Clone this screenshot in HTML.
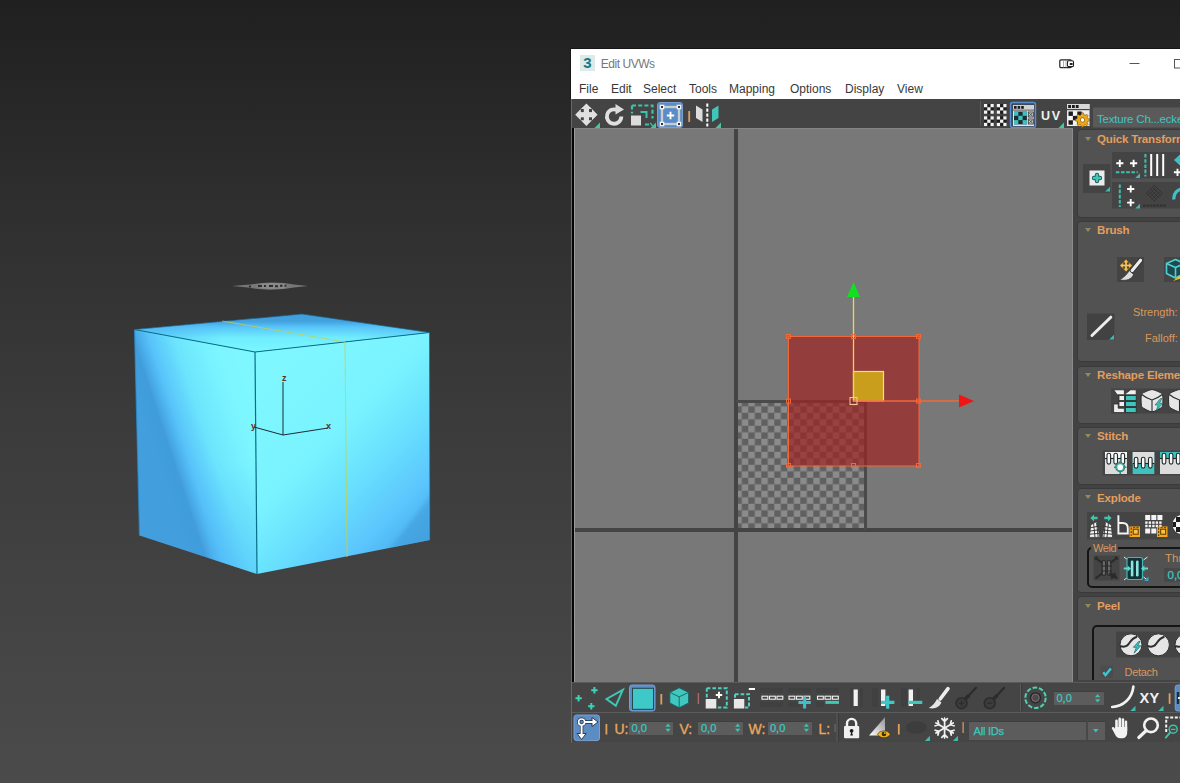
<!DOCTYPE html>
<html lang="en">
<head>
<meta charset="utf-8">
<title>Edit UVWs</title>
<style>
*{box-sizing:border-box;margin:0;padding:0}
html,body{width:1180px;height:783px;overflow:hidden;background:#333}
body{font-family:"Liberation Sans","DejaVu Sans",sans-serif;}
#root{position:absolute;left:0;top:0;width:1180px;height:783px;overflow:hidden;
 background:linear-gradient(180deg,#202020 0px,#242424 60px,#2f2f2f 210px,#3a3a3a 400px,#434343 600px,#4b4b4b 783px);}
.abs{position:absolute}
svg{position:absolute;overflow:visible}
#scene{left:0;top:0;width:580px;height:783px}
.r{position:absolute}
.t{position:absolute;white-space:nowrap;line-height:1}
.menu{font-size:12px;color:#383838;top:83px}
.hd{font-size:11.5px;font-weight:bold;color:#e39e5e;letter-spacing:-0.15px}
.lb{font-size:11px;color:#d9985e}
.teal{color:#3ec8c0;-webkit-text-stroke:0.25px #3ec8c0}
.grp{position:absolute;border:1px solid #3a3a3a;border-radius:4px;background:#525252}
.tri{position:absolute;width:0;height:0;border-left:3px solid transparent;border-right:3px solid transparent;border-top:4px solid #8c8c62}
.spin{position:absolute;background:#5c5c5c;height:15px}
</style>
</head>
<body>
<div id="root">
<svg id="scene" class="abs" width="580" height="783" viewBox="0 0 580 783">
<defs>
<linearGradient id="gTop" x1="0" y1="314" x2="0" y2="352" gradientUnits="userSpaceOnUse">
<stop offset="0" stop-color="#409edb"/><stop offset="0.2" stop-color="#43a3df"/><stop offset="0.34" stop-color="#58c4f8"/><stop offset="0.62" stop-color="#70ecfd"/><stop offset="1" stop-color="#7af8fd"/>
</linearGradient>
<linearGradient id="gTopH" x1="134" y1="0" x2="430" y2="0" gradientUnits="userSpaceOnUse">
<stop offset="0" stop-color="#4cb4f4" stop-opacity="0.75"/><stop offset="0.3" stop-color="#4cb4f4" stop-opacity="0"/><stop offset="0.75" stop-color="#4cb4f4" stop-opacity="0"/><stop offset="1" stop-color="#4cb4f4" stop-opacity="0.35"/>
</linearGradient>
<linearGradient id="gLeft" x1="150" y1="436" x2="253" y2="402" gradientUnits="userSpaceOnUse">
<stop offset="0" stop-color="#429edc"/><stop offset="0.13" stop-color="#419cda"/><stop offset="0.2" stop-color="#4cb0ec"/><stop offset="0.28" stop-color="#58c4fa"/><stop offset="0.5" stop-color="#6ce5fd"/><stop offset="0.8" stop-color="#7af5ff"/><stop offset="1" stop-color="#7ef7ff"/>
</linearGradient>
<linearGradient id="gLeftV" x1="0" y1="352" x2="0" y2="574" gradientUnits="userSpaceOnUse">
<stop offset="0" stop-color="#4cb4f6" stop-opacity="0"/><stop offset="0.5" stop-color="#4cb4f6" stop-opacity="0"/><stop offset="1" stop-color="#4cb4f6" stop-opacity="0.4"/>
</linearGradient>
<linearGradient id="gRight" x1="257" y1="352" x2="437" y2="532" gradientUnits="userSpaceOnUse">
<stop offset="0" stop-color="#80f8ff"/><stop offset="0.44" stop-color="#79f3ff"/><stop offset="0.64" stop-color="#68e0fe"/><stop offset="0.83" stop-color="#5bc5fd"/><stop offset="0.93" stop-color="#4db4f0"/><stop offset="1" stop-color="#46a8e4"/>
</linearGradient>
<filter id="blur1"><feGaussianBlur stdDeviation="0.6"/></filter>
<filter id="blur2" x="-30%" y="-30%" width="160%" height="160%"><feGaussianBlur stdDeviation="2.2"/></filter>
<clipPath id="clipR"><polygon points="255,352 429.5,332.5 430,540 257,574"/></clipPath>
</defs>
<!-- small light marker above cube -->
<polygon points="232,286 250,284.6 262,283 272,282.4 284,283 294,284.4 308,286 294,287.6 284,289 270,289.8 258,289 248,287.6" fill="#777"/>
<polygon points="256,286 262,283.6 272,283 284,283.6 288,286 284,288.4 272,289 262,288.4" fill="#8a8a8a"/>
<path d="M249 286.5h2m7 -0.5h4m2 0h2m3 0h4m2 0.2h3m2 -0.5h2.5m2 0h2" stroke="#2e2e2e" stroke-width="2" fill="none"/>
<!-- cube -->
<g filter="url(#blur1)">
<polygon points="134.5,329.5 302,314 429.5,332.5 255,352" fill="url(#gTop)"/>
<polygon points="134.5,329.5 302,314 429.5,332.5 255,352" fill="url(#gTopH)"/>
<polygon points="134.5,329.5 255,352 257,574 139.5,535.5" fill="url(#gLeft)"/>
<polygon points="170,336 255,352 257,574 215,560" fill="url(#gLeftV)"/>
<polygon points="255,352 429.5,332.5 430,540 257,574" fill="url(#gRight)"/>
</g>
<g clip-path="url(#clipR)"><polygon points="432,494 432,544 390,549" fill="#3f9cd8" fill-opacity="0.6" filter="url(#blur2)"/></g>
<g fill="none" stroke="#08708c" stroke-width="1.2">
<polyline points="134.5,329.5 255,352 429.5,332.5"/>
<polyline points="255,352 257,574"/>
<polyline points="134.5,329.5 139.5,535.5" stroke="#2a8fd0" stroke-opacity="0.7"/>
<polyline points="134.5,329.5 302,314 429.5,332.5 430,540" stroke="#1a5f88" stroke-opacity="0.65" stroke-width="1"/>
</g>
<g fill="none" stroke="#c9cf4a" stroke-width="1" stroke-opacity="0.75">
<polyline points="222,321 345,342 347,557"/>
</g>
<!-- axis tripod -->
<g fill="none" stroke="#1d2b33" stroke-width="1">
<polyline points="283,382 283,435 328,428"/>
<polyline points="283,435 254,427"/>
</g>
<g font-family="Liberation Sans, sans-serif" font-size="9" font-weight="bold" fill="#5a302c">
<text x="282" y="381">z</text><text x="326" y="429">x</text><text x="251" y="429">y</text>
</g>
</svg>

<!-- window frame -->
<div class="r" style="left:571px;top:48px;width:609px;height:696px;background:#444"></div>
<div class="r" style="left:570px;top:48px;width:610px;height:1px;background:#161616"></div>
<div class="r" style="left:570px;top:48px;width:1px;height:51px;background:#161616"></div>
<div class="r" style="left:571px;top:49px;width:609px;height:50px;background:#fff"></div>
<div class="r" style="left:571px;top:99px;width:1px;height:644px;background:#686868"></div>
<!-- title -->
<div class="r" style="left:580px;top:55px;width:15px;height:15.5px;background:#dcebe8"></div>
<div class="t" style="left:583.3px;top:54.5px;font-size:15px;font-weight:bold;color:#177585">3</div>
<div class="t" style="left:600.7px;top:58px;font-size:12px;color:#777;letter-spacing:-0.45px">Edit UVWs</div>
<svg width="130" height="30" viewBox="1050 48 130 30" style="left:1050px;top:48px">
<rect x="1059.8" y="59.8" width="11.5" height="7.8" rx="1" fill="#fff" stroke="#222" stroke-width="1.2"/>
<path d="M1063.5 60v7.5M1066 60v7.5" stroke="#999" stroke-width="0.8"/>
<rect x="1067.5" y="60.8" width="6" height="5.8" rx="1.2" fill="#fff" stroke="#222" stroke-width="1.1"/>
<rect x="1069.8" y="63" width="2.8" height="2" fill="#222"/>
<path d="M1129.5 63.5h10" stroke="#555" stroke-width="1"/>
<rect x="1174.5" y="59.5" width="9" height="8.5" fill="none" stroke="#555" stroke-width="1"/>
</svg>

<!-- menu -->
<div class="t menu" style="left:579px">File</div>
<div class="t menu" style="left:611px">Edit</div>
<div class="t menu" style="left:643px">Select</div>
<div class="t menu" style="left:689px">Tools</div>
<div class="t menu" style="left:729px">Mapping</div>
<div class="t menu" style="left:790px">Options</div>
<div class="t menu" style="left:845px">Display</div>
<div class="t menu" style="left:897px">View</div>
<!-- top toolbar -->
<div class="r" style="left:572px;top:99px;width:608px;height:29px;background:#444"></div>
<svg width="608" height="29" viewBox="572 99 608 29" style="left:572px;top:99px">
<!-- move -->
<g fill="#e0e0e0" transform="translate(586.4,114.7)">
<polygon points="0,-11.2 -5.6,-5.6 5.6,-5.6"/><polygon points="0,11.2 -5.6,5.6 5.6,5.6"/>
<polygon points="-11.2,0 -5.6,-5.6 -5.6,5.6"/><polygon points="11.2,0 5.6,-5.6 5.6,5.6"/>
<rect x="-2.6" y="-7" width="5.2" height="14"/><rect x="-7" y="-2.6" width="14" height="5.2"/>
</g>
<polygon points="600,122.5 600,128 594.5,128" fill="#48c4a0"/>
<!-- rotate -->
<path d="M617.5 110.2 A7.2 7.2 0 1 0 621.3 116.5" fill="none" stroke="#e0e0e0" stroke-width="3.8"/>
<polygon points="615.5,104 624,109.5 615.5,114.5" fill="#dcdcdc"/>
<!-- scale -->
<g fill="none" stroke="#3fc0ae" stroke-width="2.2">
<path d="M632 105.5h20.5v13" stroke-dasharray="4 2.2"/>
<path d="M632 105.5v8" stroke-dasharray="4 2.2"/>
<path d="M645 124.5h7" stroke-dasharray="4 2.2"/>
<path d="M640.5 112h6v6" stroke-width="2"/>
</g>
<rect x="631" y="115.5" width="10" height="10" fill="#dcdcdc"/>
<polygon points="656,122.5 656,128 650.5,128" fill="#48c4a0"/>
<path d="M650 123l3 3" stroke="#35b5a8" stroke-width="1.2"/>
<!-- freeform selected -->
<rect x="657.5" y="102.5" width="25" height="25" rx="2.5" fill="#5c8cc4" stroke="#7a9fd0" stroke-width="1"/>
<rect x="662" y="107" width="17" height="17" fill="none" stroke="#f4f4f4" stroke-width="2.2"/>
<rect x="662" y="107" width="17" height="17" fill="none" stroke="#4a5a70" stroke-width="0.5"/>
<g fill="#f4f4f4"><rect x="659.7" y="104.7" width="4.6" height="4.6"/><rect x="659.7" y="121.7" width="4.6" height="4.6"/><rect x="676.7" y="104.7" width="4.6" height="4.6"/><rect x="676.7" y="121.7" width="4.6" height="4.6"/></g><g fill="#333"><rect x="661.0" y="106.0" width="2" height="2"/><rect x="661.0" y="123.0" width="2" height="2"/><rect x="678.0" y="106.0" width="2" height="2"/><rect x="678.0" y="123.0" width="2" height="2"/></g>
<path d="M666.8 115.5h7.4M670.5 111.8v7.4" stroke="#fff" stroke-width="1.9"/>
<!-- separator -->
<rect x="688.3" y="111" width="1.8" height="11" fill="#d9a066"/>
<!-- mirror -->
<polygon points="696,105.5 702.5,109.5 702.5,122 696,118" fill="#dcdcdc"/>
<path d="M707.3 103.5v23" stroke="#fff" stroke-width="2" stroke-dasharray="3.2 1.8"/>
<polygon points="718.5,105.5 712,109.5 712,122 718.5,118" fill="#3fc6b6"/>
<polygon points="721,122.5 721,128 715.5,128" fill="#48c4a0"/>
<!-- right part -->
<rect x="980" y="101" width="1" height="25" fill="#5a5a5a"/>
<rect x="984" y="104" width="9.75" height="9.75" fill="#1c1c1c"/><rect x="984.00" y="104.00" width="3.25" height="3.25" fill="#f4f4f4"/><rect x="984.00" y="110.50" width="3.25" height="3.25" fill="#f4f4f4"/><rect x="987.25" y="107.25" width="3.25" height="3.25" fill="#f4f4f4"/><rect x="990.50" y="104.00" width="3.25" height="3.25" fill="#f4f4f4"/><rect x="990.50" y="110.50" width="3.25" height="3.25" fill="#f4f4f4"/>
<rect x="996.8" y="104" width="9.75" height="9.75" fill="#1c1c1c"/><rect x="996.80" y="104.00" width="3.25" height="3.25" fill="#f4f4f4"/><rect x="996.80" y="110.50" width="3.25" height="3.25" fill="#f4f4f4"/><rect x="1000.05" y="107.25" width="3.25" height="3.25" fill="#f4f4f4"/><rect x="1003.30" y="104.00" width="3.25" height="3.25" fill="#f4f4f4"/><rect x="1003.30" y="110.50" width="3.25" height="3.25" fill="#f4f4f4"/>
<rect x="984" y="116.3" width="9.75" height="9.75" fill="#1c1c1c"/><rect x="984.00" y="116.30" width="3.25" height="3.25" fill="#f4f4f4"/><rect x="984.00" y="122.80" width="3.25" height="3.25" fill="#f4f4f4"/><rect x="987.25" y="119.55" width="3.25" height="3.25" fill="#f4f4f4"/><rect x="990.50" y="116.30" width="3.25" height="3.25" fill="#f4f4f4"/><rect x="990.50" y="122.80" width="3.25" height="3.25" fill="#f4f4f4"/>
<rect x="996.8" y="116.3" width="9.75" height="9.75" fill="#1c1c1c"/><rect x="996.80" y="116.30" width="3.25" height="3.25" fill="#f4f4f4"/><rect x="996.80" y="122.80" width="3.25" height="3.25" fill="#f4f4f4"/><rect x="1000.05" y="119.55" width="3.25" height="3.25" fill="#f4f4f4"/><rect x="1003.30" y="116.30" width="3.25" height="3.25" fill="#f4f4f4"/><rect x="1003.30" y="122.80" width="3.25" height="3.25" fill="#f4f4f4"/>
<rect x="1010.5" y="102.5" width="25" height="25" rx="2" fill="#3c4a5c" stroke="#5a8fcf" stroke-width="1.4"/>
<rect x="1013" y="105" width="21" height="21" fill="#e6e6e6"/>
<rect x="1013" y="105" width="21" height="4.6" fill="#d0d0d0"/>
<rect x="1014.0" y="106" width="2.6" height="2.8" fill="#1c1c1c"/>
<rect x="1017.6" y="106" width="2.6" height="2.8" fill="#1c1c1c"/>
<rect x="1021.2" y="106" width="2.6" height="2.8" fill="#1c1c1c"/>
<rect x="1013" y="109.6" width="21" height="1" fill="#555"/>
<rect x="1014" y="111.5" width="12.90" height="12.90" fill="#1c2c30"/><rect x="1014.00" y="111.50" width="4.30" height="4.30" fill="#3fc0c0"/><rect x="1014.00" y="120.10" width="4.30" height="4.30" fill="#3fc0c0"/><rect x="1018.30" y="115.80" width="4.30" height="4.30" fill="#3fc0c0"/><rect x="1022.60" y="111.50" width="4.30" height="4.30" fill="#3fc0c0"/><rect x="1022.60" y="120.10" width="4.30" height="4.30" fill="#3fc0c0"/>
<rect x="1028.3" y="112" width="5" height="5" fill="#ddd" stroke="#333" stroke-width="0.9"/>
<path d="M1029.3 113l3 3m0 -3l-3 3" stroke="#333" stroke-width="0.9"/>
<rect x="1028.3" y="119" width="5" height="5" fill="#ddd" stroke="#333" stroke-width="0.9"/>
<path d="M1029.3 120l3 3m0 -3l-3 3" stroke="#333" stroke-width="0.9"/>
<rect x="1067" y="104" width="22.5" height="22" fill="#ececec"/>
<rect x="1067" y="104" width="22.5" height="5" fill="#dadada"/>
<rect x="1068.2" y="105" width="2.8" height="3" fill="#1c1c1c"/>
<rect x="1072.0" y="105" width="2.8" height="3" fill="#1c1c1c"/>
<rect x="1075.8" y="105" width="2.8" height="3" fill="#1c1c1c"/>
<rect x="1067" y="109" width="22.5" height="1.2" fill="#444"/>
<rect x="1068.5" y="111.5" width="13.20" height="13.20" fill="#f4f4f4"/><rect x="1068.50" y="111.50" width="4.40" height="4.40" fill="#1c1c1c"/><rect x="1068.50" y="120.30" width="4.40" height="4.40" fill="#1c1c1c"/><rect x="1072.90" y="115.90" width="4.40" height="4.40" fill="#1c1c1c"/><rect x="1077.30" y="111.50" width="4.40" height="4.40" fill="#1c1c1c"/><rect x="1077.30" y="120.30" width="4.40" height="4.40" fill="#1c1c1c"/>
<polygon points="1089.66,119.21 1089.66,120.79 1087.69,121.51 1087.23,122.60 1088.12,124.50 1087.00,125.62 1085.10,124.73 1084.01,125.19 1083.29,127.16 1081.71,127.16 1080.99,125.19 1079.90,124.73 1078.00,125.62 1076.88,124.50 1077.77,122.60 1077.31,121.51 1075.34,120.79 1075.34,119.21 1077.31,118.49 1077.77,117.40 1076.88,115.50 1078.00,114.38 1079.90,115.27 1080.99,114.81 1081.71,112.84 1083.29,112.84 1084.01,114.81 1085.10,115.27 1087.00,114.38 1088.12,115.50 1087.23,117.40 1087.69,118.49" fill="#f0a818" stroke="#5a3c00" stroke-width="0.5"/>
<circle cx="1082.5" cy="120" r="2.2" fill="#fff" stroke="#5a3c00" stroke-width="0.6"/>
<!-- UV -->
<text x="1041" y="119.6" font-family="Liberation Sans, sans-serif" font-weight="bold" font-size="12.5" fill="#f0f0f0" letter-spacing="1.6">UV</text>
<polygon points="1064,122.5 1064,128 1058.5,128" fill="#48c4a0"/>
<!-- dropdown -->
<rect x="1093" y="107.5" width="90" height="20" fill="#5a5a5a"/>
<text x="1097" y="122.5" font-family="Liberation Sans, sans-serif" font-size="11.5" fill="#3ec6c4" letter-spacing="-0.2">Texture Ch...ecke</text>
</svg>

<!-- viewport -->
<div class="r" style="left:572px;top:128px;width:2px;height:554px;background:#050505"></div>
<div class="r" id="vp" style="left:574px;top:128px;width:499px;height:554px;background:#787878;overflow:hidden;border-left:1px solid #9a9a9a;border-right:1px solid #8c8c8c;border-top:1px solid #858585">
<svg width="500" height="554" viewBox="574 128 500 554" style="left:-1px;top:-1px">
<defs>
<pattern id="chk" x="735.3" y="399.8" width="13" height="13" patternUnits="userSpaceOnUse">
<rect width="13" height="13" fill="#606060"/>
<rect width="6.5" height="6.5" fill="#8b8b8b"/><rect x="6.5" y="6.5" width="6.5" height="6.5" fill="#8b8b8b"/>
</pattern>
</defs>
<!-- checker tile -->
<rect x="738" y="402" width="127" height="126" fill="url(#chk)"/>
<!-- grid lines -->
<rect x="574" y="528" width="500" height="4" fill="#444"/>
<rect x="734" y="128" width="4" height="554" fill="#444"/>
<rect x="736" y="400" width="131" height="3" fill="#4a4a4a"/>
<rect x="864" y="400" width="3" height="130" fill="#4a4a4a"/>
<!-- selected red region -->
<rect x="788.5" y="336.5" width="130.5" height="129.5" fill="#a02323" fill-opacity="0.7" stroke="#f0683a" stroke-width="1"/>
<rect x="853.5" y="371.5" width="30" height="29.5" fill="#c99e1c" stroke="#f3e27a" stroke-width="1.2"/>
<!-- gizmo -->
<line x1="853.5" y1="401" x2="853.5" y2="296" stroke="#ecd84a" stroke-width="1.3"/>
<polygon points="853.5,282 847,297 860,297" fill="#12e020"/>
<line x1="853.5" y1="401" x2="960" y2="401" stroke="#f0683a" stroke-width="1.3"/>
<polygon points="974,401 959,394.5 959,407.5" fill="#f01414"/>
<g fill="none" stroke="#f0683a" stroke-width="1">
<rect x="786.5" y="334.5" width="4" height="4"/><rect x="851.5" y="334.5" width="4" height="4"/><rect x="916.5" y="334.5" width="4" height="4"/>
<rect x="786.5" y="399" width="4" height="4"/><rect x="916.5" y="399" width="4" height="4"/>
<rect x="786.5" y="463.5" width="4" height="4"/><rect x="851.5" y="463.5" width="4" height="4"/><rect x="916.5" y="463.5" width="4" height="4"/>
<rect x="850" y="397.5" width="7" height="7" stroke="#f6c9a0"/>
</g>
</svg>

</div>
<!-- right panel -->
<div class="r" style="left:1073px;top:128px;width:107px;height:554px;background:#424242"></div>
<!-- panel groups -->
<div class="grp" style="left:1077px;top:129px;width:110px;height:89px"></div>
<div class="grp" style="left:1077px;top:221px;width:110px;height:141px"></div>
<div class="grp" style="left:1077px;top:366px;width:110px;height:58px"></div>
<div class="grp" style="left:1077px;top:427px;width:110px;height:58px"></div>
<div class="grp" style="left:1077px;top:488px;width:110px;height:105px"></div>
<div class="grp" style="left:1077px;top:596px;width:110px;height:95px"></div>
<div class="tri" style="left:1084.5px;top:136.5px"></div>
<div class="tri" style="left:1084.5px;top:227.5px"></div>
<div class="tri" style="left:1084.5px;top:372.5px"></div>
<div class="tri" style="left:1084.5px;top:433.5px"></div>
<div class="tri" style="left:1084.5px;top:494.5px"></div>
<div class="tri" style="left:1084.5px;top:603.5px"></div>
<div class="t hd" style="left:1097px;top:134px">Quick Transform</div>
<div class="t hd" style="left:1097px;top:225px">Brush</div>
<div class="t hd" style="left:1097px;top:370px">Reshape Elements</div>
<div class="t hd" style="left:1097px;top:431px">Stitch</div>
<div class="t hd" style="left:1097px;top:493px">Explode</div>
<div class="t hd" style="left:1097px;top:601px">Peel</div>
<div class="t lb" style="left:1133px;top:307px">Strength:</div>
<div class="t lb" style="left:1145px;top:333px">Falloff:</div>
<!-- weld box -->
<div class="r" style="left:1087px;top:547px;width:110px;height:41px;border:2px solid #151515;border-radius:5px"></div>
<div class="t lb" style="left:1091px;top:542.5px;background:#525252;padding:0 2px;font-size:11px;letter-spacing:-0.4px">Weld</div>
<div class="t lb" style="left:1165px;top:553px;font-size:11.5px">Thr</div>
<div class="r" style="left:1164px;top:568px;width:30px;height:14px;background:#484848"></div>
<div class="t teal" style="left:1167.5px;top:570px;font-size:11.5px">0,0</div>
<!-- peel box -->
<div class="r" style="left:1092px;top:625px;width:110px;height:70px;border:2px solid #151515;border-radius:5px"></div>
<div class="t lb" style="left:1124.5px;top:666.5px;font-size:11px;letter-spacing:-0.3px">Detach</div>
<svg width="110" height="554" viewBox="1070 128 110 554" style="left:1070px;top:128px">
<defs>
<g id="plusW"><path d="M-3.6 0h7.2M0 -3.6v7.2" stroke="#fff" stroke-width="1.9" fill="none"/></g>
<g id="cornT"><polygon points="0,-4.8 0,0 -4.8,0" fill="#3cbcb4"/></g>
</defs>
<!-- Quick transform -->
<rect x="1083" y="164" width="27.5" height="29" fill="#444"/>
<rect x="1089.5" y="170.5" width="15" height="15" fill="#ebebeb"/>
<path d="M1094 178h6M1097 175v6" stroke="#1d5f5c" stroke-width="4.4" stroke-linecap="round" fill="none"/>
<path d="M1094 178h6M1097 175v6" stroke="#3fc6b6" stroke-width="2.6" stroke-linecap="round" fill="none"/>
<use href="#cornT" x="1110" y="191.5"/>
<rect x="1112" y="152" width="70" height="26.5" fill="#444"/>
<rect x="1112" y="182" width="70" height="26.5" fill="#444"/>
<use href="#plusW" x="1119.8" y="163.3"/><use href="#plusW" x="1133.6" y="163.3"/>
<path d="M1115.8 172.2h22" stroke="#3fc0ae" stroke-width="2" stroke-dasharray="3.6 1.6" fill="none"/>
<use href="#cornT" x="1140" y="178"/>
<path d="M1145.4 154v22.5" stroke="#3fc0ae" stroke-width="2" stroke-dasharray="3.6 1.6" fill="none"/>
<path d="M1151.2 154v22M1157.2 154v22M1163.2 154v22" stroke="#fff" stroke-width="2" fill="none"/>
<polygon points="1180,154.5 1174,160 1180,165.5" fill="#3fc0c8"/>
<use href="#plusW" x="1177.5" y="172.3"/>
<path d="M1119.8 184.4v22.5" stroke="#3fc0ae" stroke-width="2" stroke-dasharray="3.6 1.6" fill="none"/>
<use href="#plusW" x="1130.7" y="189"/><use href="#plusW" x="1130.7" y="202.6"/>
<use href="#cornT" x="1140" y="208.5"/>
<g stroke="#333" stroke-width="1.2" fill="none">
<path d="M1146.3 193.3l8 -8l8 8l-8 8zM1150.3 189.3l8 8M1158.3 189.3l-8 8M1148.3 191.3l8 8M1152.3 187.3l8 8M1160.3 191.3l-8 8M1156.3 187.3l-8 8" stroke-width="1"/>
<path d="M1143 205.7h23" stroke-width="2.2" stroke-dasharray="2.6 0.8"/>
</g>
<path d="M1174 199.5a9 9 0 0 1 9 -10.5" stroke="#3fc0c8" stroke-width="3.2" fill="none"/>
<!-- Brush icons -->
<rect x="1117" y="257" width="27" height="25" fill="#444"/>
<g transform="translate(1126,265.5)" fill="#f2c25e" stroke="#5a3a00" stroke-width="0.5">
<polygon points="0,-6.3 -3.2,-2.8 3.2,-2.8"/><polygon points="0,6.3 -3.2,2.8 3.2,2.8"/>
<polygon points="-6.3,0 -2.8,-3.2 -2.8,3.2"/><polygon points="6.3,0 2.8,-3.2 2.8,3.2"/>
<rect x="-0.9" y="-4" width="1.8" height="8" stroke="none"/><rect x="-4" y="-0.9" width="8" height="1.8" stroke="none"/>
</g>
<path d="M1140.6 260.2L1132.2 270.6" stroke="#2c2c2c" stroke-width="4.6" stroke-linecap="round" fill="none"/>
<path d="M1140.6 260.2L1132.2 270.6" stroke="#ededed" stroke-width="3.2" stroke-linecap="round" fill="none"/>
<path d="M1129.2 270.6L1133.6 274.4C1131.8 279.2 1126 281.4 1119.6 279.8C1123.5 277.8 1127 274.5 1129.2 270.6z" fill="#dedede" stroke="#2c2c2c" stroke-width="0.7"/>
<rect x="1164" y="257" width="20" height="25" fill="#444"/>
<g fill="#1d4a50" stroke="#52d0d0" stroke-width="1.6" stroke-linejoin="round">
<path d="M1166.5 263.5l9 -4l9 4v10l-9 4.5l-9 -4.5z"/>
<path d="M1166.5 263.5l9 4l9 -4M1175.5 267.5v10.5" fill="none"/>
</g>
<path d="M1173 281l7 -5.5l2 2.5z" fill="#f2c21e"/>
<!-- line icon -->
<rect x="1087" y="313.5" width="27.5" height="26.5" fill="#424242"/>
<path d="M1092 335.5L1110.8 317.2" stroke="#ededed" stroke-width="3" stroke-linecap="round" fill="none"/>
<use href="#cornT" x="1114" y="339.5"/>
<!-- Reshape -->
<rect x="1111" y="388.5" width="72" height="25" fill="#444"/>
<g stroke="#2a2a2a" stroke-width="0.8">
<path d="M1113.6 389.8h10.8v5h-7.2z" fill="#f0f0f0"/>
<rect x="1119" y="395.6" width="5.4" height="5" fill="#f0f0f0"/>
<rect x="1119" y="401.6" width="5.4" height="5" fill="#f0f0f0"/>
<path d="M1113.6 404h4.6v4.2h6.2v4.4h-10.8z" fill="#ececec"/>
<path d="M1125.6 394.8v-1.2l5 -3.8h5.6v5z" fill="#f0f0f0"/>
<rect x="1125.6" y="395.6" width="10.6" height="5" fill="#3fc4bc"/>
<rect x="1125.6" y="401.6" width="10.6" height="5" fill="#3fc4bc"/>
<rect x="1125.6" y="407.6" width="10.6" height="5" fill="#3fc4bc"/>
</g>
<g id="rcube">
<path d="M1152 389.6c2 0 9 3 10.2 4.2c1 1 1 11 0 13c-1.2 1.6 -8.2 5 -10.2 5s-9 -3.4 -10.2 -5c-1 -2 -1 -12 0 -13c1.2 -1.2 8.2 -4.2 10.2 -4.2z" fill="#e6e6e6" stroke="#2a2a2a" stroke-width="1"/>
<path d="M1141.8 394.5c3 2.5 7 4.5 10.2 5.5c3.2 -1 7.2 -3 10.2 -5.5M1152 400v11.5" fill="none" stroke="#2a2a2a" stroke-width="1.1"/>
</g>
<path d="M1160.5 398.5l-5.5 6.5h3.2l-2.2 6l6.8 -7.8h-3.3l2.5 -4.7z" fill="#3fc4bc" stroke="#1d5f5c" stroke-width="0.6"/>
<use href="#rcube" x="27.5"/>
<!-- Stitch -->
<rect x="1102.5" y="450.5" width="80" height="25" fill="#444"/>
<rect x="1105" y="452" width="22" height="22" fill="#dcdcdc"/><rect x="1105" y="452" width="22" height="6.5" fill="#f6f6f6"/>
<rect x="1132.7" y="452" width="21.6" height="22" fill="#3fc2be"/><rect x="1132.7" y="452" width="21.6" height="11.5" fill="#dedede"/>
<rect x="1160" y="452" width="22" height="22" fill="#dcdcdc"/><rect x="1160" y="452" width="22" height="6.5" fill="#3fc2be"/>
<g fill="#fafafa" stroke="#1e2a2a" stroke-width="1.1">
<path d="M1105 458.5h22" /><path d="M1132.7 463.5h21.6"/><path d="M1160 458.5h22"/>
<rect x="1107" y="453.3" width="3.6" height="10.8" rx="1.8"/><rect x="1113.9" y="453.3" width="3.6" height="10.8" rx="1.8"/><rect x="1121" y="453.3" width="3.6" height="10.8" rx="1.8"/>
<rect x="1134.3" y="457.3" width="3.6" height="10.8" rx="1.8"/><rect x="1141.4" y="457.3" width="3.6" height="10.8" rx="1.8"/><rect x="1148.5" y="457.3" width="3.6" height="10.8" rx="1.8"/>
<rect x="1162.2" y="453.3" width="3.6" height="10.8" rx="1.8"/><rect x="1169.3" y="453.3" width="3.6" height="10.8" rx="1.8"/><rect x="1176.4" y="453.3" width="3.6" height="10.8" rx="1.8"/>
</g>
<circle cx="1120.2" cy="467.2" r="3.6" fill="#fff" stroke="#1d5f5c" stroke-width="2.6"/>
<circle cx="1120.2" cy="467.2" r="3.6" fill="#fff" stroke="#3fae9e" stroke-width="1.5"/>
<path d="M1120.2 461v2.5M1120.2 471v3M1114 467.2h2.5M1124 467.2h2.6" stroke="#2f8f84" stroke-width="1.6"/>
<!-- Explode -->
<rect x="1087" y="512" width="96" height="27.5" fill="#444"/>
<g fill="#3fc4b0" stroke="none">
<polygon points="1090.3,518 1094,514.6 1094,516.8 1097.6,516.8 1097.6,519.2 1094,519.2 1094,521.4"/>
<polygon points="1111.6,518 1107.9,514.6 1107.9,516.8 1104.3,516.8 1104.3,519.2 1107.9,519.2 1107.9,521.4"/>
</g>
<g fill="#f4f4f4" stroke="#2a2a2a" stroke-width="0.7">
<path d="M1089.4 537.4l1.4 -12.6l6 -3.2l3.2 15.8z"/>
<path d="M1112.6 537.4l-1.4 -12.6l-6 -3.2l-3.2 15.8z"/>
</g>
<g fill="none" stroke="#2a2a2a" stroke-width="0.9">
<path d="M1090.6 527.8l7.6 -1.6M1090.2 531l8.6 -1.2M1089.8 534.2l9.6 -0.8M1093.6 523.4l1.4 14M1096.6 522.6l1.6 14.8"/>
<path d="M1111.4 527.8l-7.6 -1.6M1111.8 531l-8.6 -1.2M1112.2 534.2l-9.6 -0.8M1108.4 523.4l-1.4 14M1105.4 522.6l-1.6 14.8"/>
</g>
<path d="M1118.4 515.2v18.3h9.4v-5.2c0 -3.2 -2 -5.3 -5.2 -5.3h-4.2" fill="none" stroke="#f4f4f4" stroke-width="1.9"/>
<g id="oicon">
<rect x="1129.5" y="526.5" width="10.5" height="10.5" fill="#f4a81c"/>
<rect x="1133.2" y="529.2" width="5" height="5" fill="#f8c04a" stroke="#4a2c00" stroke-width="0.9"/>
<path d="M1131.2 527.5v8.5" stroke="#4a2c00" stroke-width="1" stroke-dasharray="2.2 1.2" fill="none"/>
<path d="M1133 527.6h6" stroke="#4a2c00" stroke-width="0.8" stroke-dasharray="2.2 1.2" fill="none"/>
</g>
<g fill="#f4f4f4">
<rect x="1145.2" y="515" width="5" height="5"/><rect x="1151.3" y="515" width="5" height="5"/><rect x="1157.4" y="515" width="5" height="5"/>
<rect x="1145.2" y="528.5" width="5" height="5"/><rect x="1151.3" y="528.5" width="5" height="5"/>
<rect x="1145.2" y="521.4" width="2.4" height="2.4"/><rect x="1148.7" y="521.4" width="2.4" height="2.4"/><rect x="1152.2" y="521.4" width="2.4" height="2.4"/><rect x="1155.7" y="521.4" width="2.4" height="2.4"/><rect x="1159.2" y="521.4" width="2.4" height="2.4"/>
<rect x="1145.2" y="524.8" width="2.4" height="2.4"/><rect x="1148.7" y="524.8" width="2.4" height="2.4"/><rect x="1152.2" y="524.8" width="2.4" height="2.4"/><rect x="1155.7" y="524.8" width="2.4" height="2.4"/><rect x="1159.2" y="524.8" width="2.4" height="2.4"/>
</g>
<use href="#oicon" x="27.5"/>
<circle cx="1182" cy="524.5" r="9.5" fill="#f4f4f4"/>
<path d="M1176 517h4v5h-4zM1172.5 522h3.5v5h-3.5zM1176 527h4v5h-4z" fill="#1c1c1c"/>
<!-- Weld -->
<rect x="1093.5" y="555.5" width="26" height="25" fill="#444"/>
<g stroke="#2a2a2a" stroke-width="2" fill="none">
<path d="M1095 557.5l8.5 6.5M1117.5 557.5l-8.5 6.5M1095.5 578.5l8.5 -6.5M1117 578.5l-8 -6.5"/>
<path d="M1094.5 559.5l3 -3M1118 559.5l-3 -3" stroke-width="1.4"/>
<rect x="1102.2" y="560.5" width="3.4" height="15" rx="1.7" fill="#6a6a6a" stroke-width="1.1"/><rect x="1107.4" y="560.5" width="3.4" height="15" rx="1.7" fill="#6a6a6a" stroke-width="1.1"/>
<path d="M1101 566h11M1101 571h11" stroke-width="1"/>
<path d="M1109 573l3 4l2.5 -3.5l2 5M1111 578.5l4 -2" stroke-width="1.4"/>
</g>
<g>
<path d="M1124 557l4 3M1147.5 557l-4 3M1124 580l4 -3M1147.5 580l-4 -3" stroke="#d8eeee" stroke-width="1" fill="none"/>
<rect x="1127" y="557.5" width="15.5" height="22" rx="2" fill="#0f3336" stroke="#3fb8b4" stroke-width="1.2"/>
<rect x="1130.8" y="560.5" width="2.6" height="16" rx="1.3" fill="#8fe4e0"/><rect x="1136" y="560.5" width="2.6" height="16" rx="1.3" fill="#8fe4e0"/>
<path d="M1123.8 568.5h5.5M1148 568.5h-5.5" stroke="#5fd8d0" stroke-width="1.8" fill="none"/>
<polygon points="1131,568.5 1127.6,565.5 1127.6,571.5" fill="#5fd8d0"/><polygon points="1141,568.5 1144.4,565.5 1144.4,571.5" fill="#5fd8d0"/>
</g>
<polygon points="1148.5,576.5 1148.5,581 1144,581" fill="#35a5d0"/>
<!-- Peel -->
<rect x="1116" y="631.5" width="70" height="26" fill="#444"/>
<g id="pcirc">
<circle cx="1131" cy="644.8" r="11" fill="#e6e6e6" stroke="#2e2e2e" stroke-width="1"/>
<path d="M1120.2 646c3.5 1.2 6.8 0.6 8.6 -2.2c2 -3.2 4.2 -5.8 8.2 -7" fill="none" stroke="#2e2e2e" stroke-width="2"/>
</g>
<path d="M1138.6 641.5l-5.2 5.8h3l-2.2 5.8l6.6 -7.4h-3.2l2.4 -4.2z" fill="#3fc4d0" stroke="#1d5f5c" stroke-width="0.7"/>
<use href="#pcirc" x="27.4"/>
<use href="#pcirc" x="55"/>
<rect x="1100.5" y="665.5" width="12.5" height="12.5" fill="#4c4c4c"/>
<path d="M1103.2 672.2l2.3 2.8l5.4 -6.4" fill="none" stroke="#3fc4d0" stroke-width="2.4"/>


</svg>


<div class="r" style="left:1073px;top:679.5px;width:107px;height:2.5px;background:#444"></div>
<!-- bottom toolbars -->
<div class="r" style="left:572px;top:682px;width:608px;height:62px;background:#454545"></div>
<div class="r" style="left:572px;top:682px;width:608px;height:1px;background:#5a5a5a"></div>
<div class="r" style="left:572px;top:711.5px;width:608px;height:1.5px;background:#5c5c5c"></div>
<div class="r" style="left:572px;top:742px;width:608px;height:2px;background:#4a4a4a"></div>
<!-- spinner fields -->
<div class="r" style="left:629px;top:720.5px;width:44px;height:14px;background:#5c5c5c;border-top:1px solid #3e3e3e"></div>
<div class="r" style="left:698px;top:720.5px;width:45px;height:14px;background:#5c5c5c;border-top:1px solid #3e3e3e"></div>
<div class="r" style="left:768px;top:720.5px;width:44px;height:14px;background:#5c5c5c;border-top:1px solid #3e3e3e"></div>
<div class="r" style="left:1053.5px;top:690.5px;width:50px;height:14.5px;background:#5c5c5c;border-top:1px solid #3e3e3e"></div>
<div class="r" style="left:969px;top:720.5px;width:136px;height:19.5px;background:#5c5c5c;border-top:1px solid #3e3e3e"></div>
<div class="r" style="left:1085.5px;top:721px;width:2px;height:19px;background:#484848"></div>
<div class="t teal" style="left:631.5px;top:722.5px;font-size:11px">0,0</div>
<div class="t teal" style="left:701px;top:722.5px;font-size:11px">0,0</div>
<div class="t teal" style="left:770px;top:722.5px;font-size:11px">0,0</div>
<div class="t teal" style="left:1056.5px;top:693px;font-size:11px">0,0</div>
<div class="t teal" style="left:973.5px;top:726px;font-size:11px;letter-spacing:-0.2px">All IDs</div>
<div class="t" style="left:614.5px;top:721.5px;font-size:14px;color:#e8a860;-webkit-text-stroke:0.35px #e8a860">U:</div>
<div class="t" style="left:679.5px;top:721.5px;font-size:14px;color:#e8a860;-webkit-text-stroke:0.35px #e8a860">V:</div>
<div class="t" style="left:748.5px;top:721.5px;font-size:14px;color:#e8a860;-webkit-text-stroke:0.35px #e8a860">W:</div>
<div class="t" style="left:818.5px;top:721.5px;font-size:14px;color:#e8a860;-webkit-text-stroke:0.35px #e8a860">L:</div>
<div class="t" style="left:1139.5px;top:690.5px;font-size:14.5px;font-weight:bold;color:#f2f2f2;letter-spacing:0.3px">XY</div>
<svg width="608" height="62" viewBox="572 682 608 62" style="left:572px;top:682px">
<defs>
<g id="plT"><path d="M-3.2 0h6.4M0 -3.2v6.4" stroke="#3fd0b8" stroke-width="2" fill="none"/></g>
<g id="spA"><polygon points="0,-4.2 -2.6,-1 2.6,-1" fill="#3fc0b0"/><polygon points="0,4.2 -2.6,1 2.6,1" fill="#3fc0b0"/></g>
<g id="osep"><rect x="-0.9" y="0" width="1.8" height="10.5" fill="#e0a060"/></g>
<g id="cT"><polygon points="0,-5.2 0,0 -5.2,0" fill="#3cbcae"/></g>
<g id="lp"><rect x="0" y="0" width="5.8" height="3" fill="none" stroke="#f2f2f2" stroke-width="1.1"/></g>
</defs>
<!-- row 1 -->
<use href="#plT" x="594.4" y="690.2"/><use href="#plT" x="578.6" y="698.3"/><use href="#plT" x="591.3" y="706.2"/>
<polygon points="622.8,689.8 606.5,699 615.8,705.8" fill="none" stroke="#3fc8b8" stroke-width="2" stroke-linejoin="miter"/>
<rect x="629.5" y="685" width="25.5" height="26" rx="2.5" fill="#5c8cc4" stroke="#7a9fd0" stroke-width="1"/>
<rect x="632.5" y="688.3" width="21" height="21" fill="#3fc8c8" stroke="#22484c" stroke-width="1"/>
<use href="#osep" x="661.3" y="694"/>
<g stroke="#1d5f5c" stroke-width="0.9" fill="#3fc8c0" stroke-linejoin="round">
<path d="M679.2 687.8l9.4 4.6v10.6l-9.4 4.8l-9.4 -4.8v-10.6z"/>
<path d="M669.8 692.4l9.4 4.4l9.4 -4.4M679.2 696.8v11" fill="none"/>
</g>
<rect x="697.7" y="693" width="1.4" height="11" fill="#a86a6a"/>
<g fill="none" stroke="#4fd0c0" stroke-width="2">
<path d="M706.8 688.2h20v19.3h-9" stroke-dasharray="3.6 2"/><path d="M706.8 688.2v10" stroke-dasharray="3.6 2"/>
<path d="M735 694.2h14v13.3h-4" stroke-dasharray="3.6 2"/><path d="M735 694.2v4" stroke-dasharray="3.6 2"/>
</g>
<rect x="705.7" y="699" width="10.6" height="9.5" fill="#e8e8e8"/>
<rect x="733.9" y="699" width="10.4" height="9.5" fill="#e8e8e8"/>
<path d="M715.8 695h6.4M719 691.8v6.4" stroke="#fff" stroke-width="1.9" fill="none"/>
<path d="M748.8 689h6.2" stroke="#fff" stroke-width="2" fill="none"/>
<g fill="#404040">
<rect x="760" y="688" width="23" height="5"/><rect x="760" y="702" width="23" height="5"/>
<rect x="788" y="688" width="23" height="5"/><rect x="788" y="702" width="12" height="5"/>
<rect x="816" y="688" width="23" height="5"/><rect x="816" y="702" width="8" height="5"/>
<rect x="850" y="688" width="3" height="19"/><rect x="860" y="688" width="3" height="19"/>
<rect x="872" y="688" width="6" height="19"/><rect x="901" y="688" width="6" height="19"/><rect x="916" y="688" width="4" height="12"/>
</g>
<use href="#lp" x="762" y="696.2"/><use href="#lp" x="769.5" y="696.2"/><use href="#lp" x="777" y="696.2"/>
<use href="#lp" x="789" y="696.2"/><use href="#lp" x="796.5" y="696.2"/><use href="#lp" x="804" y="696.2"/>
<use href="#lp" x="817.5" y="696.2"/><use href="#lp" x="825" y="696.2"/><use href="#lp" x="832.5" y="696.2"/>
<path d="M798.4 702.4h12.4M804.6 696.4v12.2" stroke="#3fc0c8" stroke-width="3" fill="none"/>
<path d="M825.4 702.4h13.6" stroke="#3fc8b8" stroke-width="3" fill="none"/>
<rect x="853.6" y="689.5" width="4.2" height="16.5" fill="#f2f2f2"/>
<rect x="881" y="689.5" width="4.4" height="16.5" fill="#f2f2f2"/>
<rect x="908.6" y="689.5" width="4.4" height="16.5" fill="#f2f2f2"/>
<path d="M881 702.4h13.4M887.7 695.8v13" stroke="#3fc8c8" stroke-width="3.2" fill="none"/>
<path d="M908.3 702.4h14" stroke="#3fc8b8" stroke-width="3.2" fill="none"/>
<!-- paint brush -->
<path d="M948 688.6L940.2 699" stroke="#ededed" stroke-width="3.6" stroke-linecap="round" fill="none"/>
<path d="M937 699L941.4 702.6C939.6 707.4 934.4 709.4 928.8 708C932.4 706 935.2 703 937 699z" fill="#e6e6e6"/>
<g stroke="#2c2c2c" fill="none">
<circle cx="961.5" cy="703.2" r="5.4" stroke-width="1.6" fill="#3c3c3c"/><path d="M958.8 703.2h5.4M961.5 700.5v5.4" stroke-width="1.2"/>
<path d="M965.5 698.8l3.5 -3.5" stroke-width="3.4"/><path d="M969 695.3l7 -7.5" stroke-width="2.2" stroke-linecap="round"/>
<circle cx="989.7" cy="703.2" r="5.4" stroke-width="1.6" fill="#3c3c3c"/><path d="M987 703.2h5.4" stroke-width="1.2"/>
<path d="M993.7 698.8l3.5 -3.5" stroke-width="3.4"/><path d="M997.2 695.3l7 -7.5" stroke-width="2.2" stroke-linecap="round"/>
</g>
<rect x="1020" y="684" width="1.2" height="27" fill="#5a5a5a"/><rect x="1021.2" y="684" width="1" height="27" fill="#3a3a3a"/>
<circle cx="1035.5" cy="697.8" r="10.2" fill="none" stroke="#4fd0b0" stroke-width="2" stroke-dasharray="4.6 1.8"/>
<circle cx="1035.5" cy="697.8" r="5" fill="#4a4a4a" stroke="#262626" stroke-width="1.3"/>
<circle cx="1035.5" cy="697.8" r="3.7" fill="none" stroke="#8a7a7a" stroke-width="0.7"/>
<use href="#spA" x="1097.6" y="698.2"/>
<path d="M1112.2 707c11 -0.5 20 -8.5 21.2 -20.5" fill="none" stroke="#f2f2f2" stroke-width="2.6" stroke-linecap="round"/>
<use href="#cT" x="1135.5" y="711"/>
<use href="#cT" x="1163.5" y="711"/>
<use href="#osep" x="1169.6" y="693.3"/>
<rect x="1175.2" y="685" width="12" height="26" rx="2.5" fill="#5c8cc4" stroke="#7a9fd0" stroke-width="1"/>
<path d="M1178 692v12" stroke="#16303a" stroke-width="2.4"/><path d="M1178 698h4" stroke="#e8f4f4" stroke-width="2"/>
<!-- row 2 -->
<rect x="574" y="715" width="25.5" height="25.6" rx="2.5" fill="#5c8cc4" stroke="#7a9fd0" stroke-width="1"/>
<g stroke="#1c2c44" stroke-width="3.4" fill="none" stroke-linejoin="round">
<path d="M584.5 722h8M581.6 725v9"/>
</g>
<circle cx="581.6" cy="722" r="3" fill="#5c8cc4" stroke="#1c2c44" stroke-width="3.2"/>
<polygon points="598,722 592,717.5 592,726.5" fill="#fff" stroke="#1c2c44" stroke-width="0.9"/>
<polygon points="581.6,739.5 577.1,733.5 586.1,733.5" fill="#fff" stroke="#1c2c44" stroke-width="0.9"/>
<path d="M584.5 722h8.5M581.6 725v9.5" stroke="#fff" stroke-width="2" fill="none"/>
<circle cx="581.6" cy="722" r="3" fill="none" stroke="#fff" stroke-width="1.7"/>
<use href="#osep" x="606.4" y="724"/>
<use href="#spA" x="668" y="727.7"/><use href="#spA" x="737.7" y="727.7"/><use href="#spA" x="806.4" y="727.7"/>
<rect x="836.6" y="713" width="1.2" height="29" fill="#5e5e5e"/><rect x="837.8" y="713" width="1" height="29" fill="#3a3a3a"/>
<rect x="834.5" y="724" width="1.2" height="8" fill="#6a6a6a"/>
<!-- lock -->
<path d="M847 727v-3.5a4.6 4.6 0 0 1 9.2 0v3.5" fill="none" stroke="#f4f4f4" stroke-width="2.4"/>
<rect x="844" y="726" width="15.2" height="12.2" rx="1" fill="#f0f0f0"/>
<circle cx="851.6" cy="730.8" r="1.9" fill="#1c1c1c"/><path d="M851.6 731l-1.4 4.6h2.8z" fill="#1c1c1c"/>
<!-- tri + eye -->
<defs><linearGradient id="gTri" x1="869" y1="736" x2="885" y2="720" gradientUnits="userSpaceOnUse"><stop offset="0" stop-color="#fff"/><stop offset="1" stop-color="#9a9a9a"/></linearGradient></defs>
<polygon points="869,735.6 885,735.6 885,717.3" fill="url(#gTri)"/>
<path d="M877.5 734.3c2.5 -4.6 10.3 -4.6 12.8 0c-2.5 4.6 -10.3 4.6 -12.8 0z" fill="#f0b020" stroke="#3a2a00" stroke-width="0.6"/>
<circle cx="884" cy="734" r="2.3" fill="#3a2a00"/><circle cx="884.8" cy="733.2" r="0.9" fill="#f0b020"/>
<use href="#osep" x="898.8" y="724"/>
<ellipse cx="916.4" cy="727.5" rx="10.5" ry="6.2" fill="#3d3d3d"/>
<use href="#cT" x="930" y="741"/>
<g stroke="#f2f2f2" stroke-width="1.7" fill="none" stroke-linecap="round" transform="translate(944.6,728)">
<g id="sfa"><path d="M0 -10v20M0 -6.5l-2.8 -2.8M0 -6.5l2.8 -2.8M0 6.5l-2.8 2.8M0 6.5l2.8 2.8"/></g>
<use href="#sfa" transform="rotate(60)"/><use href="#sfa" transform="rotate(120)"/>
</g>
<use href="#cT" x="958" y="741"/>
<rect x="962.4" y="722" width="1.5" height="11" fill="#c08868"/>
<polygon points="1093,729 1098.6,729 1095.8,732.6" fill="#3fc0c0"/>
<!-- hand -->
<g fill="#f2f2f2">
<rect x="1115.2" y="719.5" width="2.6" height="10" rx="1.3"/><rect x="1118.4" y="717.6" width="2.6" height="12" rx="1.3"/><rect x="1121.6" y="718.2" width="2.6" height="12" rx="1.3"/><rect x="1124.7" y="720.5" width="2.5" height="11" rx="1.25"/>
<path d="M1115.2 727h12v5.5c0 3.5 -2 5.8 -5.5 5.8h-1.5c-2.5 0 -3.8 -1.2 -5 -3.5l-3.3 -6.3c-0.5 -1.2 1 -2.2 2 -1.2l1.3 1.8z"/>
</g>
<!-- magnifier -->
<circle cx="1151" cy="725.3" r="6.8" fill="none" stroke="#f2f2f2" stroke-width="2.6"/>
<path d="M1146.3 730.5l-7.5 7" stroke="#f2f2f2" stroke-width="3.2" stroke-linecap="round"/>
<!-- zoom region -->
<path d="M1166.2 732v-14.4h16" fill="none" stroke="#f2f2f2" stroke-width="2" stroke-dasharray="3 1.6"/>
<circle cx="1173.2" cy="729.2" r="4" fill="#4a4a4a" stroke="#3fc0a8" stroke-width="1.5"/>
<path d="M1171 729.4h4.4" stroke="#3fc0a8" stroke-width="1.2"/>
<path d="M1170.2 732.4l-4.4 5.2" stroke="#3fc0a8" stroke-width="2" stroke-linecap="round"/>

</svg>


</div>
</body>
</html>
